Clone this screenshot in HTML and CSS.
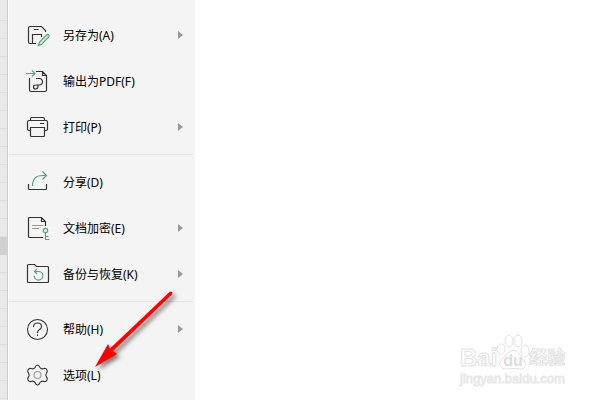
FILE: index.html
```html
<!DOCTYPE html>
<html lang="zh-CN">
<head>
    <meta charset="UTF-8">
    <meta name="viewport" content="width=device-width, initial-scale=1.0">
    <title>文件菜单</title>
    <link rel="stylesheet" href="styles.css">
</head>
<body>
    <div class="window">
        <div class="row-headers">
            <div class="current-row"></div>
        </div>
        <nav class="menu">
            <button type="button" class="menu-item">
                <svg class="icon" viewBox="0 0 26 26">
                    <path d="M11 21.500H5q-1.500 0-1.500-1.500V6q0-1.500 1.500-1.500h11.500l4 4V10M9 7.500h4.500M7.500 21v-8.500h9V15"/>
                    <path class="green pencil" d="M13.500 23.500l1-3.500 7-7q1.200-1 2.200 0t0 2.200l-7 7z"/>
                </svg>
                <span class="label">另存为(A)</span>
                <span class="arrow"></span>
            </button>
            <button type="button" class="menu-item">
                <svg class="icon" viewBox="0 0 26 26">
                    <path d="M4.500 10v12q0 1.500 1.500 1.500h14q1.500 0 1.500-1.500V7.500l-4-4H11M17.500 3.500v4h4M11 10.500h3q3.500 0 3.500 3.200T14 17h-2.500q-3 0-3 2t2 2q2.500 0 2.500-3v-1"/>
                    <path class="green" d="M1 5.500h9M7 2.500l3 3-3 3"/>
                </svg>
                <span class="label">输出为PDF(F)</span>
            </button>
            <button type="button" class="menu-item">
                <svg class="icon" viewBox="0 0 26 26">
                    <path d="M5.500 6.500V5q0-1.500 1.500-1.500h11q1.500 0 1.500 1.500v1.500M5.500 16.500H4q-1.500 0-1.500-1.500V8q0-1.500 1.500-1.500h17q1.500 0 1.500 1.500v7q0 1.500-1.500 1.500h-1.500M5.500 13.500h14v8q0 1-1 1h-12q-1 0-1-1zM15 9.500h4"/>
                </svg>
                <span class="label">打印(P)</span>
                <span class="arrow"></span>
            </button>
            <hr>
            <button type="button" class="menu-item">
                <svg class="icon" viewBox="0 0 26 26">
                    <path d="M3.500 15v4.500q0 1 1 1h16q1 0 1-1V15"/>
                    <path class="green" d="M7.500 17q0-10.500 10-10.500h4M17.500 2.500l4 4-4 4"/>
                </svg>
                <span class="label">分享(D)</span>
            </button>
            <button type="button" class="menu-item">
                <svg class="icon" viewBox="0 0 26 26">
                    <path d="M18 22.500H4.500q-1 0-1-1v-18q0-1 1-1h12l4 4V11M16.500 2.500v4h4"/>
                    <path class="gray" d="M7 10.500h11M7 13.500h7"/>
                    <path class="green" d="M20.500 18v6.500h4M20.500 21.500h3"/>
                    <circle class="green" cx="20.500" cy="15.500" r="2.200"/>
                </svg>
                <span class="label">文档加密(E)</span>
                <span class="arrow"></span>
            </button>
            <button type="button" class="menu-item">
                <svg class="icon" viewBox="0 0 26 26">
                    <path d="M2.500 4.500q0-1 1-1h6l2 2h11q1 0 1 1v14q0 1-1 1h-19q-1 0-1-1z"/>
                    <path class="green" d="M9.500 10.500h4a4.300 4.300 0 1 1-4.300 4.300M12 8l-2.500 2.500L12 13"/>
                </svg>
                <span class="label">备份与恢复(K)</span>
                <span class="arrow"></span>
            </button>
            <hr>
            <button type="button" class="menu-item">
                <svg class="icon thin" viewBox="0 0 26 26">
                    <circle cx="12.500" cy="13.500" r="10"/>
                    <path d="M8.500 11q0-4 4-4t4 3.500q0 2-2 3t-2 3.500M12.500 18.500v1.500"/>
                </svg>
                <span class="label">帮助(H)</span>
                <span class="arrow"></span>
            </button>
            <button type="button" class="menu-item">
                <svg class="icon thin" viewBox="0 0 26 26">
                    <path d="M10 5.500q1-2.500 2.500-2.500T15 5.500q1.500 2 4 1 2-.5 3 1.500 1 1.500-.5 3-1.500 2 0 4 1.500 1.500.5 3-1 2-3 1.500-2.500-1-4 1-1 2.500-2.500 2.500T10 20.500q-1.500-2-4-1-2 .5-3-1.500-1-1.500.5-3 1.500-2 0-4Q2 9.500 3 8q1-2 3-1.500 2.500 1 4-1z"/>
                    <circle class="gray" cx="12.500" cy="13" r="3.500"/>
                </svg>
                <span class="label">选项(L)</span>
            </button>
        </nav>
        <main class="page"></main>
    </div>

    <!-- arrow pointing at the options item -->
    <svg class="pointer" viewBox="0 0 90 86">
        <path d="M78.500 3q1.500-1 2.500 0t0 2.500L22 62l4 3L4 78l13-23 2 4.500z"/>
    </svg>

    <div class="watermark">
        <div class="brand">
            <span>Bai</span>
            <svg class="paw" viewBox="0 0 34 36">
                <ellipse cx="5" cy="15" rx="4" ry="5"/>
                <ellipse cx="13" cy="7" rx="4" ry="6"/>
                <ellipse cx="22" cy="7" rx="4" ry="6"/>
                <ellipse cx="29" cy="17" rx="4" ry="6"/>
                <path d="M17 16q4 0 7 5t5 7q2 7-5 7-7-1-14 0-7 0-6-7 2-3 6-7t7-5z"/>
                <text x="17" y="32">du</text>
            </svg>
            <span class="brand-cn">经验</span>
        </div>
        <div class="site">jingyan.baidu.com</div>
    </div>
</body>
</html>
```

FILE: styles.css
```css
body {
    margin: 0;
    font-family: "Noto Sans", "Noto Sans CJK SC", sans-serif;
    font-size: 12px;
    color: #000;
    background: #fff;
    overflow: hidden;
}
.window {
    display: flex;
    min-height: 100vh;
}
.row-headers {
    width: 8px;
    box-sizing: border-box;
    padding-top: 237px;
    border-right: 1px solid #ccc;
    background: repeating-linear-gradient(#e9e9e9 0 17px, #dedede 17px 18px) 0 3px;
}
.current-row {
    height: 18px;
    background: #d0d0d0;
}
.menu {
    width: 187px;
    box-sizing: border-box;
    padding-top: 12px;
    border-left: 1px solid #fff;
    background: #f4f4f4;
}
.page {
    flex: 1;
}
.menu-item {
    display: flex;
    align-items: center;
    width: 100%;
    height: 46px;
    padding: 0 12px 0 16px;
    border: none;
    background: none;
    color: inherit;
    font: inherit;
    text-align: left;
    cursor: pointer;
}
.menu-item:hover {
    background: #e8e8e8;
}
.label {
    flex: 1;
    margin-left: 12px;
    padding-top: 2px;
    line-height: 18px;
    white-space: nowrap;
}
.arrow {
    border: 4px solid transparent;
    border-left: 5px solid #999;
    border-right: none;
}
hr {
    height: 1px;
    margin: 4px 2px 4px 0;
    border: none;
    background: #e3e3e3;
}
.icon {
    width: 26px;
    height: 26px;
    fill: none;
    stroke: #333;
    stroke-width: 1.2;
}
.icon .green {
    stroke: #5fa37d;
}
.icon .pencil {
    fill: #d5e8dc;
}
.icon .gray {
    stroke: #999;
}
.thin {
    stroke-width: 1.1;
}
.pointer {
    position: absolute;
    left: 91px;
    top: 289px;
    width: 90px;
    height: 86px;
    fill: #f00;
    pointer-events: none;
    overflow: visible;
    filter: drop-shadow(3px 3px 2px rgba(0, 0, 0, 0.5));
}
.watermark {
    position: absolute;
    right: 33px;
    bottom: 12px;
    width: 107px;
    font-family: "Liberation Sans", "Noto Sans CJK SC", sans-serif;
    color: #fff;
    -webkit-text-stroke: 1px #e2e2e2;
}
.brand {
    display: flex;
    align-items: flex-end;
    font-size: 24px;
    font-weight: bold;
    line-height: 24px;
}
.paw {
    width: 34px;
    height: 36px;
    margin: 0 -1px;
    fill: #fff;
    stroke: #e2e2e2;
}
.paw text {
    font-size: 16px;
    text-anchor: middle;
    fill: #ddd;
    stroke: none;
}
.brand-cn {
    font-size: 18px;
    white-space: nowrap;
}
.site {
    font-size: 13px;
    line-height: 18px;
    -webkit-text-stroke: 1px #e8e8e8;
}
```
